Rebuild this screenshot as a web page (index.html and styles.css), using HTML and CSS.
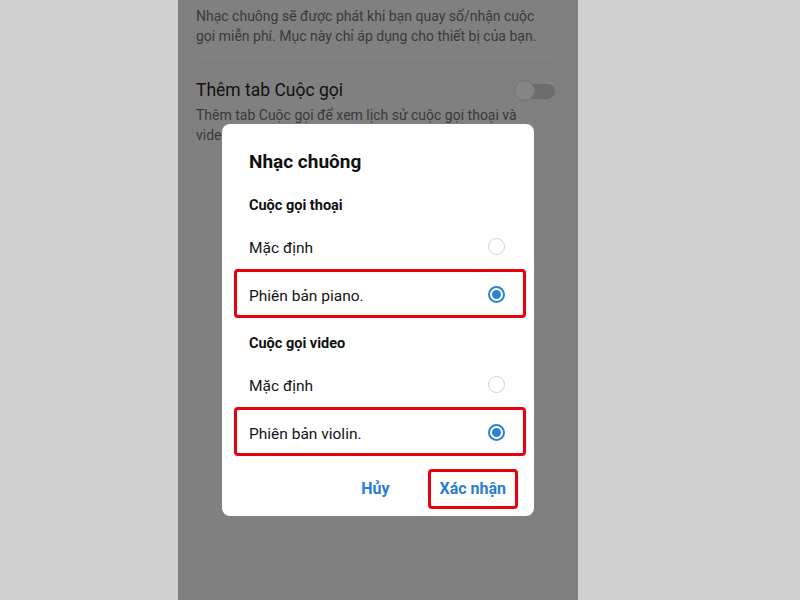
FILE: index.html
```html
<!DOCTYPE html>
<html lang="vi">
<head>
    <meta charset="UTF-8">
    <meta name="viewport" content="width=device-width, initial-scale=1.0">
    <title>Nhạc chuông</title>
    <link rel="stylesheet" href="styles.css">
</head>
<body>
    <div class="page">
        <div class="phone">
            <div class="settings">
                <p class="setting-note first">Nhạc chuông sẽ được phát khi bạn quay số/nhận cuộc gọi miễn phí. Mục này chỉ áp dụng cho thiết bị của bạn.</p>
                <div class="setting">
                    <div class="setting-head">
                        <span class="setting-title">Thêm tab Cuộc gọi</span>
                        <span class="toggle"><span class="toggle-thumb"></span></span>
                    </div>
                    <p class="setting-note">Thêm tab Cuộc gọi để xem lịch sử cuộc gọi thoại và video.</p>
                </div>
            </div>

            <div class="dialog">
                <h2 class="dialog-title">Nhạc chuông</h2>

                <div class="group-title">Cuộc gọi thoại</div>
                <div class="option">
                    <span>Mặc định</span>
                    <span class="radio"></span>
                </div>
                <div class="option marked">
                    <span>Phiên bản piano.</span>
                    <span class="radio checked"></span>
                </div>

                <div class="group-title second">Cuộc gọi video</div>
                <div class="option">
                    <span>Mặc định</span>
                    <span class="radio"></span>
                </div>
                <div class="option marked">
                    <span>Phiên bản violin.</span>
                    <span class="radio checked"></span>
                </div>

                <div class="dialog-actions">
                    <button class="action">Hủy</button>
                    <button class="action marked-btn">Xác nhận</button>
                </div>
            </div>
        </div>
    </div>
</body>
</html>
```

FILE: styles.css
```css
body {
    margin: 0;
    padding: 0;
    background-color: #d0d0d0;
    font-family: Roboto, 'Noto Sans', sans-serif;
}
.page {
    display: grid;
    grid-template-columns: 178px 400px 1fr;
    height: 600px;
}
.phone {
    grid-column: 2;
    position: relative;
    height: 600px;
    overflow: hidden;
    background-color: #808080;
}
.settings {
    padding: 6px 23px 0 18px;
}
.setting-note {
    margin: 0;
    font-size: 14px;
    line-height: 20px;
    color: #3a3a3a;
}
.setting-note.first {
    padding-bottom: 16px;
    border-bottom: 1px solid #7a7a7a;
}
.setting {
    padding-top: 15px;
}
.setting-head {
    display: flex;
    align-items: center;
    justify-content: space-between;
    margin-bottom: 3px;
}
.setting-title {
    font-size: 17.5px;
    line-height: 24px;
    color: #111;
}
.toggle {
    position: relative;
    width: 41px;
    height: 15px;
    margin-top: 2px;
}
.toggle::before {
    content: "";
    position: absolute;
    left: 11px;
    right: 0;
    top: 0;
    bottom: 0;
    border-radius: 8px;
    background-color: #6d6d6d;
}
.toggle-thumb {
    position: absolute;
    left: 0;
    top: -4px;
    width: 21px;
    height: 21px;
    border-radius: 50%;
    background-color: #858585;
    border: 1px solid #727272;
    box-sizing: border-box;
}

/* ringtone dialog */
.dialog {
    position: absolute;
    left: 44px;
    top: 124px;
    width: 312px;
    padding: 26px 0 7px;
    background-color: #fff;
    border-radius: 8px;
    box-sizing: border-box;
}
.dialog-title {
    margin: 0 0 22px;
    padding-left: 27px;
    font-size: 19px;
    line-height: 24px;
    font-weight: bold;
    color: #111;
}
.group-title {
    padding-left: 27px;
    font-size: 14.5px;
    line-height: 20px;
    font-weight: bold;
    color: #111;
    margin-bottom: 6px;
}
.group-title.second {
    margin-top: 16px;
    margin-bottom: 6px;
}
.option {
    position: relative;
    display: flex;
    align-items: center;
    justify-content: space-between;
    height: 48px;
    padding: 0 29px 0 27px;
    font-size: 15.5px;
    line-height: 20px;
    color: #151515;
}
.option span:first-child {
    margin-top: 4px;
}
.radio {
    width: 17px;
    height: 17px;
    border-radius: 50%;
    border: 1.5px solid #d2d2d2;
    box-sizing: border-box;
    margin-top: 1px;
}
.radio.checked {
    border: 2px solid #2b80da;
    display: flex;
    align-items: center;
    justify-content: center;
}
.radio.checked::after {
    content: "";
    width: 9px;
    height: 9px;
    border-radius: 50%;
    background-color: #2b80da;
}
.marked::after {
    content: "";
    position: absolute;
    left: 12px;
    right: 8px;
    top: -1px;
    bottom: 0;
    border: 3px solid #e8000c;
    border-radius: 4px;
}
.dialog-actions {
    display: flex;
    justify-content: flex-end;
    align-items: center;
    gap: 26px;
    height: 40px;
    margin-top: 13px;
    padding-right: 16px;
}
.action {
    font-family: Roboto, 'Noto Sans', sans-serif;
    font-size: 16px;
    font-weight: bold;
    color: #2a7dd2;
    background: none;
    border: 3px solid transparent;
    border-radius: 4px;
    padding: 7px 9px 8px;
    cursor: pointer;
}
.marked-btn {
    border-color: #e8000c;
}
```
